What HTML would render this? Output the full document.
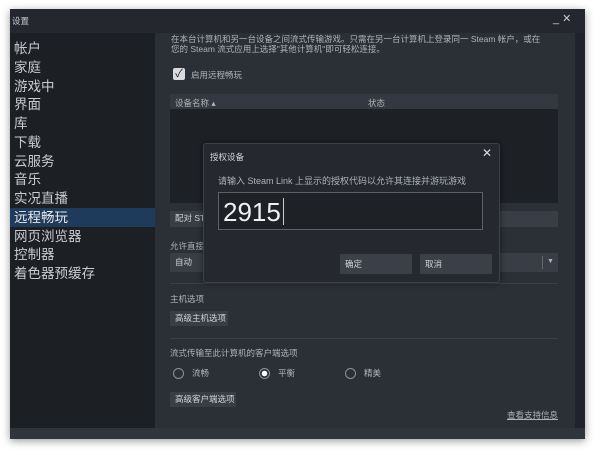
<!DOCTYPE html>
<html><head><meta charset="utf-8"><style>
*{margin:0;padding:0;box-sizing:border-box}
body{width:600px;height:455px;background:#fff;position:relative;overflow:hidden;font-family:"Liberation Sans","Noto Sans CJK SC",sans-serif}
.a{position:absolute}
.win{left:10px;top:9px;width:575px;height:430px;background:#24272d;box-shadow:0 2px 8px rgba(0,0,0,.4)}
.side{left:10px;top:33px;width:145px;height:395px;background:#1c1f24}
.side div{position:absolute;left:4px;font-size:13.5px;color:#c8cbd0;height:19px;line-height:19px;width:141px;padding-left:0}
.cont{left:155px;top:33px;width:420px;height:395px;background:#2b2f36}
.t{font-size:8.5px;color:#aeb3ba;white-space:nowrap}
.btn{background:#393e46;color:#d0d3d8;font-size:8.5px;line-height:15px;padding-left:5px}
.sep{height:1px;background:#3a3f47}
.rad{width:11px;height:11px;border:1.5px solid #8d9299;border-radius:50%}
</style></head><body>
<div class="a win"></div>
<div class="a t" style="left:12px;top:15px;color:#c8cbd0">设置</div>
<div class="a t" style="left:553px;top:12px;font-size:11px;color:#ccc">_ ✕</div>
<div class="a side">
<div style="top:6px">帐户</div><div style="top:25px">家庭</div><div style="top:44px">游戏中</div><div style="top:62px">界面</div><div style="top:81px">库</div><div style="top:100px">下载</div><div style="top:119px">云服务</div><div style="top:137px">音乐</div><div style="top:156px">实况直播</div><div style="top:175px;left:0;width:145px;padding-left:4px;background:#1f3b5c;color:#e6e8ea">远程畅玩</div><div style="top:194px">网页浏览器</div><div style="top:212px">控制器</div><div style="top:231px">着色器预缓存</div>
</div>
<div class="a cont"></div>
<div class="a" style="left:575px;top:33px;width:10px;height:395px;background:#202329"></div>
<div class="a" style="left:10px;top:428px;width:575px;height:11px;background:#30343b"></div>
<div class="a t" style="left:171px;top:33px">在本台计算机和另一台设备之间流式传输游戏。只需在另一台计算机上登录同一 Steam 帐户，或在</div>
<div class="a t" style="left:171px;top:43px">您的 Steam 流式应用上选择"其他计算机"即可轻松连接。</div>
<div class="a" style="left:173px;top:68px;width:12px;height:12px;background:#d8dade;border-radius:2px;color:#222;font-size:11px;line-height:12px;text-align:center">✓</div>
<div class="a t" style="left:191px;top:69px">启用远程畅玩</div>
<div class="a" style="left:170px;top:94px;width:388px;height:15px;background:#343840"></div>
<div class="a t" style="left:175px;top:97px">设备名称 ▴</div>
<div class="a t" style="left:368px;top:97px">状态</div>
<div class="a" style="left:170px;top:109px;width:388px;height:94px;background:#1d2025"></div>
<div class="a btn" style="left:170px;top:211px;width:388px;height:16px">配对 ST</div>
<div class="a t" style="left:170px;top:240px">允许直接</div>
<div class="a btn" style="left:170px;top:253px;width:388px;height:19px;line-height:19px">自动</div>
<div class="a" style="left:542px;top:256px;width:1px;height:13px;background:#666"></div>
<div class="a t" style="left:547px;top:258px;font-size:7px">▼</div>
<div class="a sep" style="left:170px;top:283px;width:388px"></div>
<div class="a t" style="left:170px;top:293px">主机选项</div>
<div class="a btn" style="left:170px;top:311px;width:58px;height:15px">高级主机选项</div>
<div class="a sep" style="left:170px;top:338px;width:388px"></div>
<div class="a t" style="left:170px;top:347px">流式传输至此计算机的客户端选项</div>
<div class="a rad" style="left:173px;top:368px"></div><div class="a t" style="left:192px;top:367px">流畅</div>
<div class="a rad" style="left:259px;top:368px;background:radial-gradient(#fff 2.5px,transparent 3px)"></div><div class="a t" style="left:278px;top:367px">平衡</div>
<div class="a rad" style="left:345px;top:368px"></div><div class="a t" style="left:364px;top:367px">精美</div>
<div class="a btn" style="left:170px;top:392px;width:66px;height:15px">高级客户端选项</div>
<div class="a t" style="left:507px;top:409px;text-decoration:underline">查看支持信息</div>
<div class="a" style="left:203px;top:143px;width:297px;height:140px;background:#25282e;border:1px solid #3c4048;border-radius:3px;box-shadow:0 0 6px rgba(0,0,0,.5)"></div>
<div class="a t" style="left:210px;top:151px;color:#d4d6da">授权设备</div>
<div class="a" style="left:482px;top:146px;font-size:12px;color:#ddd">✕</div>
<div class="a t" style="left:218px;top:174px;font-size:9px">请输入 Steam Link 上显示的授权代码以允许其连接并游玩游戏</div>
<div class="a" style="left:218px;top:192px;width:265px;height:38px;background:#1e2126;border:1px solid #5c6069"></div>
<div class="a" style="left:223px;top:197px;font-size:26px;color:#eef0f2;line-height:30px">2915</div>
<div class="a" style="left:283px;top:198px;width:1px;height:27px;background:#ccc"></div>
<div class="a btn" style="left:340px;top:254px;width:72px;height:20px;line-height:20px;background:#3b4048">确定</div>
<div class="a btn" style="left:420px;top:254px;width:72px;height:20px;line-height:20px;background:#3b4048">取消</div>
</body></html>
